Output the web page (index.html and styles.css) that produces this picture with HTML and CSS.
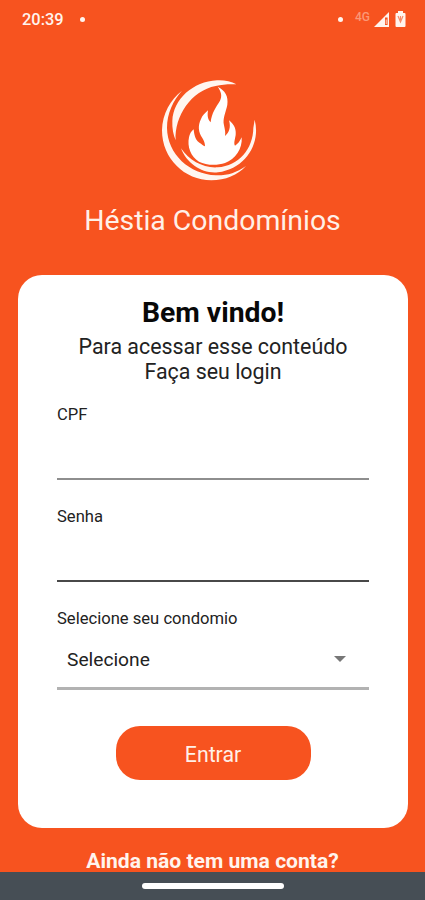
FILE: index.html
```
<!DOCTYPE html>
<html lang="pt-BR">
<head>
  <meta charset="UTF-8" />
  <meta name="viewport" content="width=device-width, initial-scale=1.0"/>
  <title>Héstia Condomínios</title>
  <link rel="stylesheet" href="styles.css">
</head>
<body>
  <div class="screen">
    <div class="status-bar">
      <span class="time">20:39</span>
      <span class="dot"></span>
      <span class="dot dot-right"></span>
      <span class="network">4G</span>
      <svg class="signal" width="16" height="15" viewBox="0 0 16 15">
        <path d="M15 0V15H0Z" fill="#fff4ee"/>
        <path d="M11 5.5H13.6V13H11Z" fill="#f7531f"/>
        <path d="M11.7 7.5H12.8V12H11.7Z" fill="#fbc3ae"/>
      </svg>
      <svg class="battery" width="11" height="16" viewBox="0 0 11 16">
        <path d="M3 0H8V2H9.5Q10.5 2 10.5 3V15Q10.5 16 9.5 16H1.5Q.5 16 .5 15V3Q.5 2 1.5 2H3Z" fill="#fff4ee"/>
        <path d="M3 5L5.5 11L8 5M5.5 5V9" fill="none" stroke="#f78a68" stroke-width="1.2"/>
      </svg>
    </div>

    <div class="brand">
      <svg class="logo" width="120" height="120" viewBox="0 0 360 360" fill="#fff6f0">
        <path d="M96 62C62 88 37 130 36 181C36 266 104 331 184 331C226 331 263 315 288 288C258 309 231 317 198 316C119 313 52 253 51 174C51 129 70 91 96 62Z"/>
        <path d="M259 43C243 34 223 30 201 31C129 35 70 87 67 153C66 175 70 195 77 211C73 138 124 62 197 48C217 43 239 42 259 43Z"/>
        <path d="M314 149C333 221 286 297 204 307C157 312 111 282 93 235C119 272 159 295 203 292C267 288 309 237 310 174Z"/>
        <path fill="#fff" d="M203 50C225 61 236 79 232 104C228 126 217 145 222 166C225 180 227 188 225 198C238 188 243 171 237 151C254 164 259 180 257 195C254 211 251 221 255 227C264 222 270 213 275 202C278 236 256 268 225 279C201 287 168 286 147 275C122 261 111 229 117 202C119 192 123 184 131 178C133 198 137 213 153 221C158 226 162 228 165 229C165 219 162 212 157 204C145 187 143 167 153 147C157 137 164 130 174 121C172 135 172 147 182 157C185 128 198 112 210 92C217 78 214 65 203 50Z"/>
      </svg>
      <h1>Héstia Condomínios</h1>
    </div>

    <form class="card">
      <h2>Bem vindo!</h2>
      <p class="subtitle">Para acessar esse conteúdo<br>Faça seu login</p>

      <label for="cpf">CPF</label>
      <input type="text" id="cpf" />

      <label for="senha">Senha</label>
      <input type="password" id="senha" class="line-dark" />

      <label for="condominio">Selecione seu condomio</label>
      <div class="select-box">
        <select id="condominio">
          <option>Selecione</option>
        </select>
        <svg width="12" height="6" viewBox="0 0 12 6"><path d="M0 0H12L6 6Z" fill="#777"/></svg>
      </div>

      <button type="submit">Entrar</button>
    </form>

    <div class="signup">Ainda não tem uma conta?</div>

    <div class="nav-bar">
      <span class="nav-handle"></span>
    </div>
  </div>
</body>
</html>
```
FILE: styles.css
```
body {
  margin: 0;
  font-family: Roboto, sans-serif;
  background-color: #f7531f;
  color: #222;
}
.screen {
  display: flex;
  flex-direction: column;
  height: 900px;
  overflow: hidden;
}
.status-bar {
  display: flex;
  align-items: center;
  height: 38px;
  flex: none;
  box-sizing: border-box;
  padding: 0 19px 0 22px;
  color: #fff4ee;
}
.time {
  width: 58px;
  font-size: 16.4px;
  font-weight: 500;
}
.dot {
  width: 5px;
  height: 5px;
  border-radius: 50%;
  background-color: #fff4ee;
}
.dot-right {
  margin-left: auto;
}
.network {
  width: 18px;
  margin-left: 12px;
  margin-right: 1px;
  margin-top: -5px;
  font-size: 12px;
  font-weight: 500;
  color: #fb9877;
}
.battery {
  margin-left: 5px;
}
.brand {
  display: flex;
  flex-direction: column;
  align-items: center;
  height: 237px;
  flex: none;
}
.logo {
  margin-top: 32px;
  margin-right: 5px;
}
h1 {
  margin: 14px 0 0;
  font-size: 28.4px;
  line-height: 34px;
  font-weight: 400;
  color: #fff0e8;
}
.card {
  display: flex;
  flex-direction: column;
  flex: none;
  height: 553px;
  margin: 0 17px 0 18px;
  padding: 21px 39px 0;
  box-sizing: border-box;
  border-radius: 24px;
  background-color: #fff;
}
h2 {
  margin: 0;
  font-size: 28.3px;
  line-height: 34px;
  font-weight: 700;
  text-align: center;
  color: #080808;
}
.subtitle {
  margin: 4px 0 21px;
  font-size: 21.4px;
  line-height: 25px;
  text-align: center;
}
label {
  font-size: 16.6px;
  line-height: 20px;
}
input {
  height: 55px;
  margin: 0 0 27px;
  padding: 0;
  border: none;
  border-bottom: 2px solid #8e8e8e;
  box-sizing: border-box;
  background: none;
  font: 20px Roboto, sans-serif;
  outline: none;
}
.line-dark {
  height: 55px;
  border-bottom-color: #484848;
}
.select-box {
  display: flex;
  align-items: center;
  justify-content: space-between;
  height: 61px;
  padding: 2px 23px 0 10px;
  box-sizing: border-box;
  border-bottom: 3px solid #b2b2b2;
}
select {
  flex: 1;
  padding: 0;
  border: none;
  appearance: none;
  background: none;
  font: 19.2px Roboto, sans-serif;
  color: #222;
}
button {
  align-self: center;
  width: 195px;
  height: 54px;
  margin-top: 36px;
  padding: 3px 0 0;
  border: none;
  border-radius: 24px;
  background-color: #f7531f;
  color: #fff0e8;
  font: 21.3px Roboto, sans-serif;
}
.signup {
  height: 44px;
  flex: none;
  padding-top: 20px;
  box-sizing: border-box;
  font-size: 21.1px;
  line-height: 26px;
  font-weight: 700;
  text-align: center;
  color: #fff4ee;
}
.nav-bar {
  display: flex;
  justify-content: center;
  height: 28px;
  flex: none;
  box-sizing: border-box;
  padding-top: 11px;
  background-color: #464e55;
}
.nav-handle {
  width: 142px;
  height: 6px;
  border-radius: 3px;
  background-color: #fff;
}
```
